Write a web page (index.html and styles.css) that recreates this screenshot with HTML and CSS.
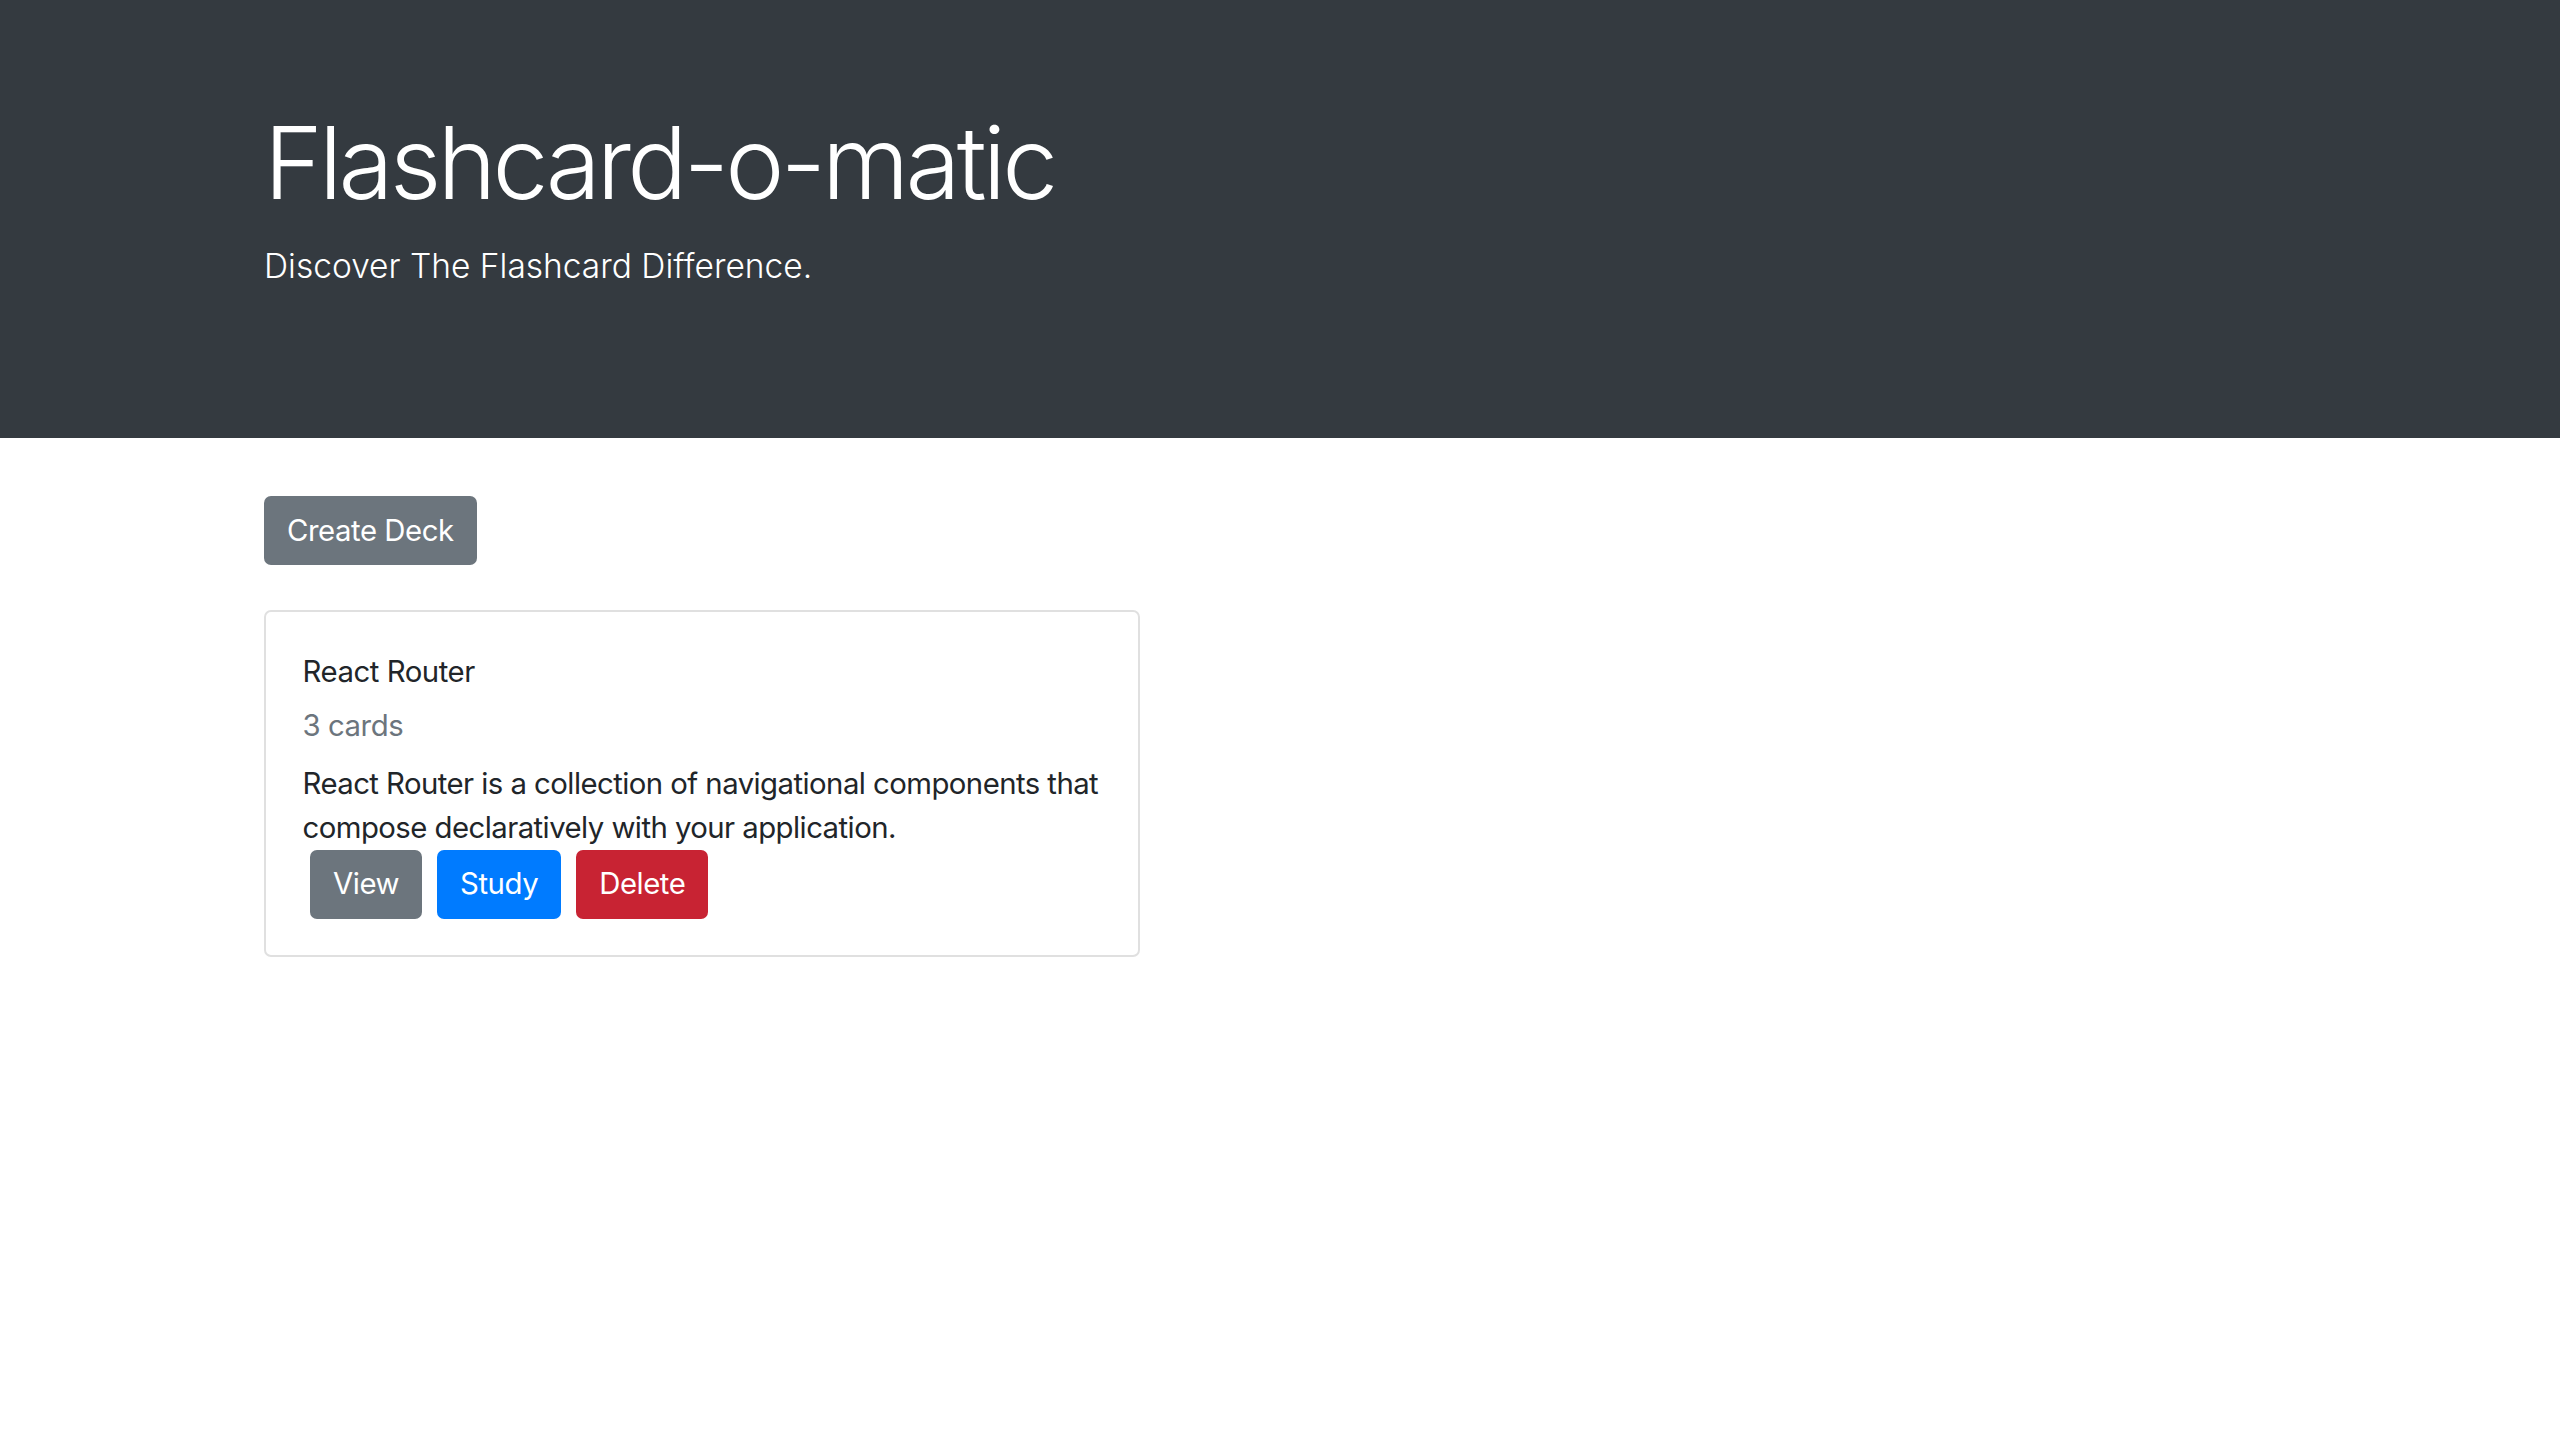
FILE: index.html
```html
<!DOCTYPE html>
<html lang="en">
<head>
<meta charset="utf-8">
<title>Flashcard-o-matic</title>
<link rel="stylesheet" href="styles.css">
</head>
<body>
<header class="jumbotron">
  <div class="container">
    <h1 class="display">Flashcard-o-matic</h1>
    <p class="lead">Discover The Flashcard Difference.</p>
  </div>
</header>
<main class="container">
  <button class="btn btn-secondary btn-create" type="button">Create Deck</button>
  <section class="deck-list">
    <article class="card">
      <div class="card-body">
        <div class="card-title">React Router</div>
        <div class="card-subtitle">3 cards</div>
        <p class="card-text">React Router is a collection of navigational components that compose declaratively with your application.</p>
        <div class="card-actions">
          <button class="btn btn-secondary" type="button">View</button>
          <button class="btn btn-primary" type="button">Study</button>
          <button class="btn btn-danger" type="button">Delete</button>
        </div>
      </div>
    </article>
  </section>
</main>
</body>
</html>
```
FILE: styles.css
```css
* { box-sizing: border-box; }

body {
  margin: 0;
  font-family: Inter, "Liberation Sans", sans-serif;
  font-size: 29.33px;
  line-height: 44px;
  letter-spacing: -0.45px;
  color: #212529;
  background: #fff;
}

.container {
  max-width: 2032px;
  margin: 0 auto;
}

.jumbotron {
  background: #343a40;
  color: #fff;
  padding: 101px 0 150px;
}

.display {
  margin: 0 0 20px;
  font-size: 100px;
  font-weight: 300;
  line-height: 123px;
  letter-spacing: -3.8px;
}

.lead {
  margin: 0;
  font-size: 33.5px;
  font-weight: 300;
  letter-spacing: 0;
}

main.container {
  padding-top: 58px;
}

.btn {
  display: inline-block;
  border: none;
  border-radius: 7px;
  padding: 12.5px 23px;
  font-family: inherit;
  font-size: 29.33px;
  line-height: 44px;
  letter-spacing: -0.45px;
  color: #fff;
  cursor: pointer;
}

.btn-secondary { background: #6c757d; }
.btn-primary { background: #007bff; }
.btn-danger { background: #c82333; }

.deck-list {
  margin-top: 45px;
}

.card {
  width: 876px;
  border: 2px solid #e0e0e0;
  border-radius: 7px;
}

.card-body {
  padding: 37.5px 30px 36px 36.5px;
}

.card-title { margin-bottom: 10px; }

.card-subtitle {
  color: #6c757d;
  margin-bottom: 14px;
}

.card-text {
  margin: 0;
  letter-spacing: -0.55px;
}

.card-actions {
  display: flex;
  gap: 15px;
  padding-left: 7.5px;
}
```
